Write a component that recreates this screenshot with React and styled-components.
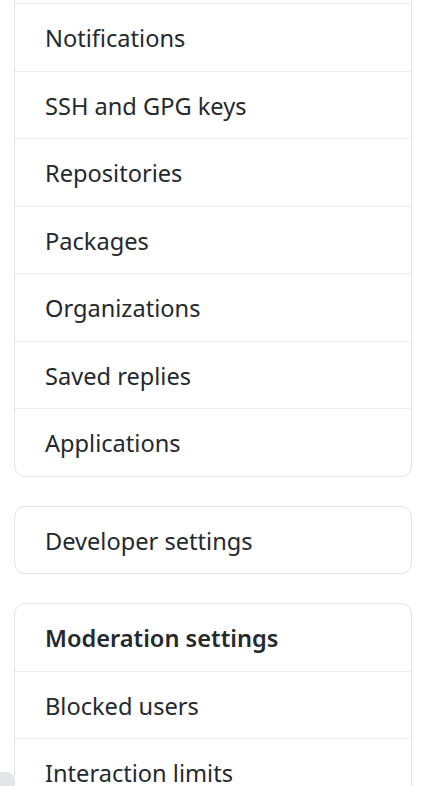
import styled, { createGlobalStyle } from "styled-components"

const Global = createGlobalStyle`
  html, body {
    margin: 0;
    padding: 0;
    background: #fff;
    overflow: hidden;
  }
  body {
    font-family: "Noto Sans", "Open Sans", sans-serif;
    color: #24292e;
  }
`;

const Page = styled.div`
  display: flex;
  flex-direction: column;
  gap: 29px;
  width: 398px;
  margin: -64.5px 0 0 14px;
`;

const Panel = styled.nav`
  display: flex;
  flex-direction: column;
  border: 1px solid #e1e4e8;
  border-radius: 11px;
  background: #fff;
`;

const Item = styled.div`
  padding: 16px 30px 14px;
  line-height: 36.5px;
  font-size: 23.6px;
  font-weight: ${p => (p.$heading ? 600 : 400)};
  color: #24292e;
  border-top: ${p => (p.$first ? "none" : "1px solid #eaecef")};
  white-space: nowrap;
`;

const Tab = styled.div`
  position: fixed;
  left: 0;
  bottom: 0;
  width: 14px;
  height: 14px;
  background: #e4e6e9;
  border-top-right-radius: 7px;
`;

const main = ["Emails", "Notifications", "SSH and GPG keys", "Repositories", "Packages", "Organizations", "Saved replies", "Applications"];

export default function App() {
  return (
    <>
      <Global />
      <Page>
        <Panel>
          {main.map((t, i) => (
            <Item key={t} $first={i === 0}>{t}</Item>
          ))}
        </Panel>
        <Panel>
          <Item $first>Developer settings</Item>
        </Panel>
        <Panel>
          <Item $first $heading>Moderation settings</Item>
          <Item>Blocked users</Item>
          <Item>Interaction limits</Item>
        </Panel>
      </Page>
      <Tab />
    </>
  )
}
